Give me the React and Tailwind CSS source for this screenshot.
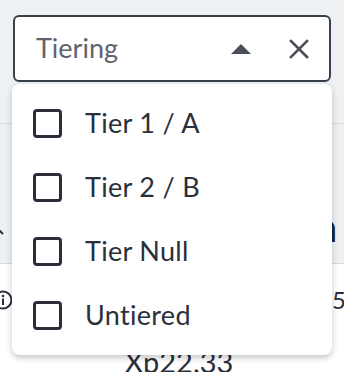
import React from 'react';

const options = ['Tier 1 / A', 'Tier 2 / B', 'Tier Null', 'Untiered'];

const App = () => {
    return (
        <div className="relative w-[344px] h-[372px] overflow-hidden bg-[#eef1f3] font-['Lato',sans-serif]">
            {/* page behind the menu */}
            <div className="h-[124px] border-b border-[#d8dcdf] pt-[15px] pl-[13px]">
                <div className="flex items-center w-[318px] h-[67px] bg-white border-2 border-[#3a3e49] rounded-[6px] pl-[21px] pr-[20px]">
                    <span className="flex-1 text-[27px] leading-none text-[#5e636d] pb-[2px]">Tiering</span>
                    <svg width="20" height="10" viewBox="0 0 20 10" className="mr-[38px] mt-[1px]">
                        <path d="M0 10 L10 0 L20 10 Z" fill="#4a4e58" />
                    </svg>
                    <svg width="20" height="20" viewBox="0 0 20 20" className="mt-[1px]">
                        <path d="M2 2 L18 18 M18 2 L2 18" stroke="#4a4e58" strokeWidth="2.6" strokeLinecap="square" />
                    </svg>
                </div>
            </div>
            <div className="h-[140px] border-b border-[#d8dcdf] flex items-start justify-between">
                <svg width="8" height="10" viewBox="0 0 8 10" className="-ml-[2px] mt-[102px]">
                    <path d="M0 3 L5 8" stroke="#2b2f3a" strokeWidth="2" />
                </svg>
                <span className="text-[40px] font-bold text-[#1f232d] mr-[7px] mt-[83px] leading-none">n</span>
            </div>
            <div className="bg-white h-[108px] relative">
                <div className="flex items-center justify-between pt-[24px]">
                    <svg width="20" height="20" viewBox="0 0 20 20" className="-ml-[7px]">
                        <circle cx="10" cy="10" r="8.5" fill="none" stroke="#2b2f3a" strokeWidth="2" />
                        <circle cx="10" cy="6" r="1.3" fill="#2b2f3a" />
                        <rect x="9" y="8.5" width="2" height="6.5" fill="#2b2f3a" />
                    </svg>
                    <span className="text-[24px] text-[#2b2f3a] -mr-[2px] leading-none">5</span>
                </div>
                <div className="text-center text-[29px] text-[#2b2f3a] mt-[35px] pl-[14px] leading-none">Xp22.33</div>
            </div>

            {/* open menu */}
            <div className="absolute left-[12px] top-[84px] w-[320px] bg-white rounded-[8px] shadow-[0_3px_6px_rgba(0,0,0,0.22)] pt-[7px] pb-[8px]">
                {options.map((opt) => (
                    <div key={opt} className="flex items-center h-[64px] pl-[21px]">
                        <span className="w-[29px] h-[29px] border-[3px] border-[#2a2e39] rounded-[4px] shrink-0" />
                        <span className="ml-[23px] text-[27px] leading-none text-[#2b2f3a] pb-[2px] tracking-[0.3px]">{opt}</span>
                    </div>
                ))}
            </div>
        </div>
    );
};

export default App;
